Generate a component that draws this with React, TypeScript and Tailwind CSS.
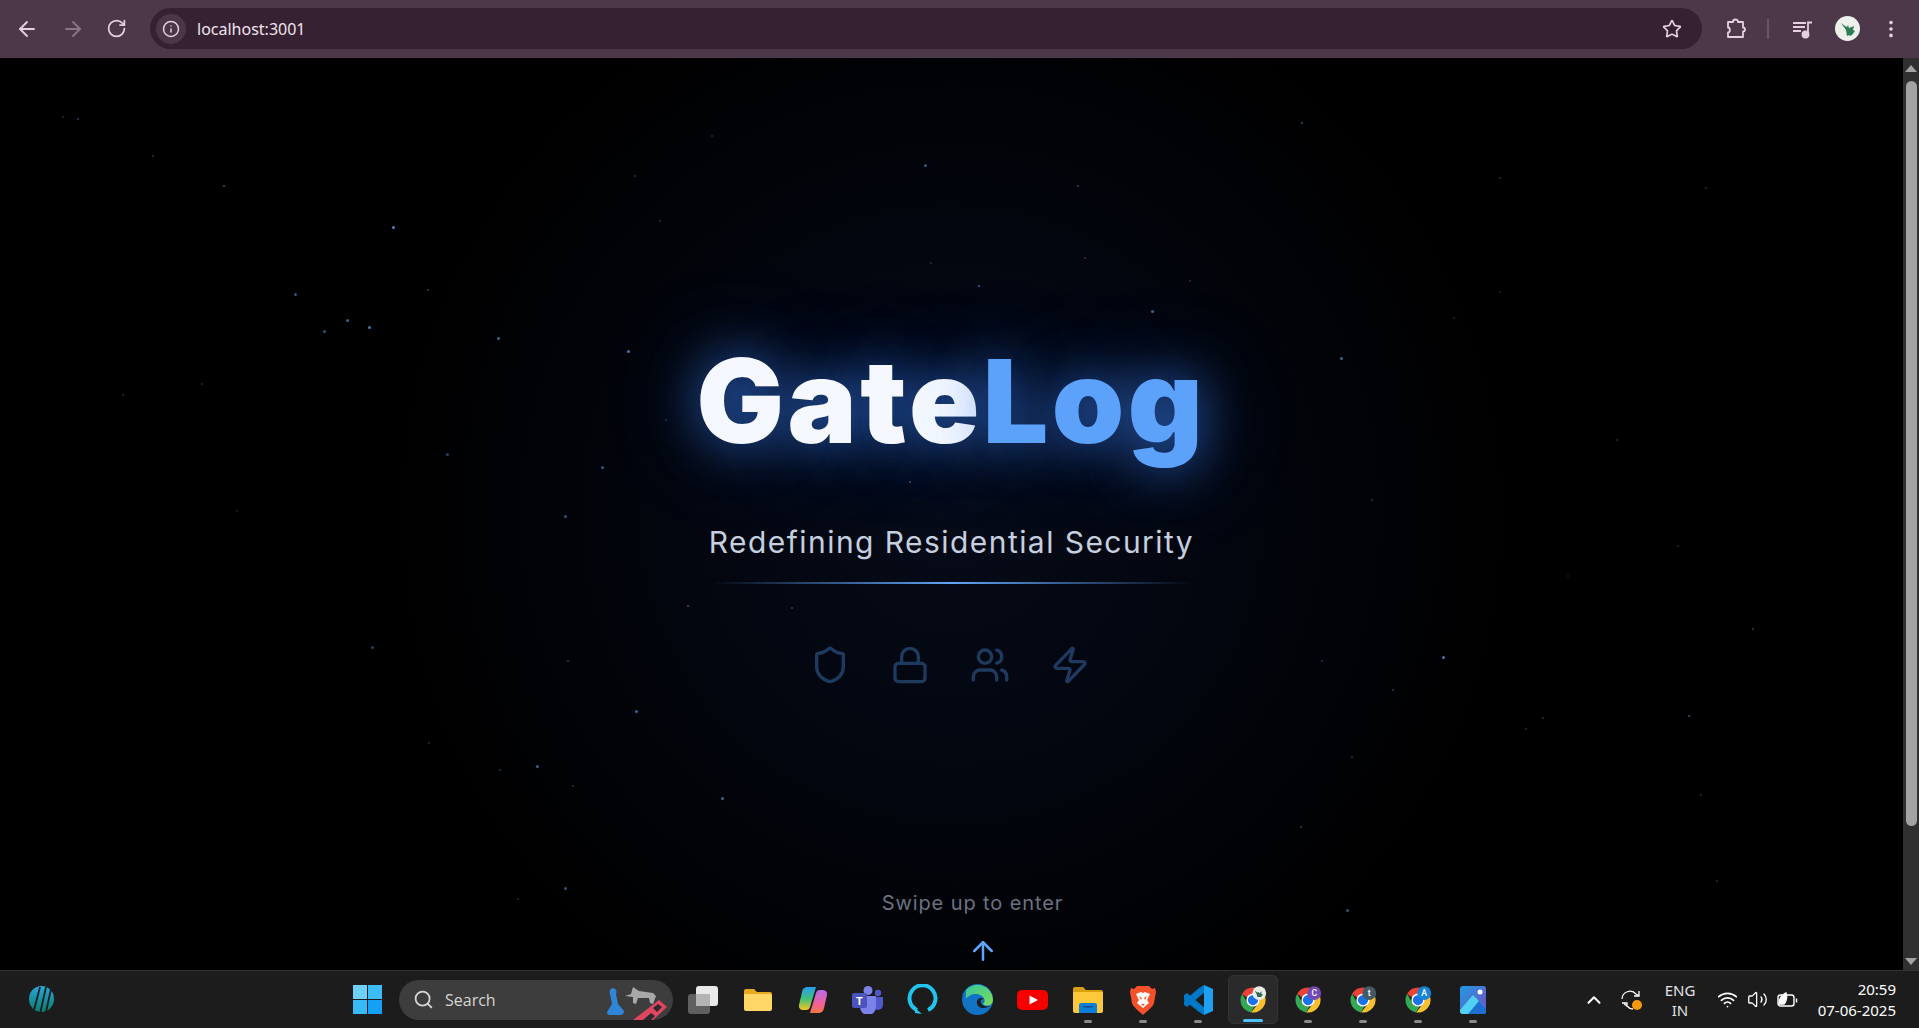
import { ArrowLeft, ArrowRight, ArrowUp, ChevronUp, Info, Lock, MoreVertical, RotateCw, Search, Shield, Star, Users, Volume2, Wifi, Zap } from 'lucide-react';

// star positions as read off the shrunk 1568px picture: [x, y, size, opacity]
const STARS: [number, number, number, number][] = [
    [51, 95, 2, 0.3], [63, 96, 2, 0.4], [124, 127, 2, 0.3], [182, 151, 2, 0.5], [320, 185, 3, 0.8],
    [240, 239, 3, 0.5], [283, 261, 3, 0.6], [301, 266, 3, 0.7], [264, 270, 3, 0.5], [349, 236, 2, 0.4],
    [406, 275, 3, 0.6], [512, 286, 3, 0.7], [100, 322, 2, 0.3], [164, 313, 2, 0.3], [364, 370, 3, 0.4],
    [491, 381, 3, 0.5], [461, 421, 3, 0.5], [193, 417, 2, 0.2], [303, 528, 3, 0.4], [463, 539, 2, 0.4],
    [519, 580, 3, 0.6], [350, 606, 2, 0.3], [438, 625, 3, 0.6], [408, 628, 2, 0.3], [589, 651, 3, 0.6],
    [461, 725, 3, 0.5], [422, 734, 2, 0.3], [467, 641, 2, 0.3], [561, 494, 2, 0.5], [646, 496, 2, 0.4],
    [1178, 536, 3, 0.7], [1095, 292, 3, 0.6], [940, 253, 3, 0.6], [799, 233, 2, 0.6], [755, 134, 3, 0.5],
    [880, 151, 2, 0.4], [1063, 100, 2, 0.5], [1225, 145, 2, 0.3], [1393, 153, 2, 0.3], [1187, 259, 2, 0.3],
    [1225, 238, 2, 0.2], [1320, 359, 2, 0.3], [1370, 445, 2, 0.3], [1431, 513, 2, 0.4], [1260, 586, 2, 0.3],
    [1379, 584, 2, 0.5], [1137, 563, 2, 0.4], [1079, 539, 2, 0.3], [1100, 743, 3, 0.5], [1402, 719, 2, 0.3],
    [1389, 649, 2, 0.3], [1062, 675, 2, 0.4], [1104, 618, 2, 0.3], [1120, 408, 2, 0.3], [971, 229, 2, 0.3],
    [886, 210, 2, 0.3], [760, 214, 2, 0.3], [581, 110, 2, 0.3], [518, 143, 2, 0.3], [538, 180, 2, 0.3],
    [743, 393, 2, 0.5], [613, 298, 2, 0.3], [543, 342, 2, 0.3], [1280, 470, 2, 0.2], [1246, 595, 2, 0.3],
];

const ChromeLogo = ({ badge, badgeColor, badgeText }: { badge?: boolean; badgeColor?: string; badgeText?: string }) => (
    <svg width="30" height="30" viewBox="0 0 48 48">
        <path fill="#fbc02d" d="M41.32 14A20 20 0 0 1 21 43.8L32.66 29A10 10 0 0 0 32.66 19L24 14z" />
        <path fill="#34a853" d="M6.68 14 15.34 29a10 10 0 0 0 11.2 4.7L21 43.8A20 20 0 0 1 6.68 14z" />
        <path fill="#ea4335" d="M24 4A20 20 0 0 1 41.32 14H24a10 10 0 0 0-9.33 6.4L6.68 14A20 20 0 0 1 24 4z" />
        <circle cx="24" cy="24" r="10.5" fill="#fff" />
        <circle cx="24" cy="24" r="8.2" fill="#1a73e8" />
        {badge && <circle cx="34" cy="13" r="11" fill={badgeColor} />}
        {badgeText && (
            <text x="34" y="18" fontSize="14" fontFamily="Roboto, sans-serif" fontWeight="500" fill="#fff" textAnchor="middle">{badgeText}</text>
        )}
        {badgeColor === '#e8ebe6' && <path fill="#2d6a4f" d="M27 9l4 3 2-1 1 2 4-3-1 4 3 1-3 4h-6l-1-4z" />}
    </svg>
);

const TaskItem = ({ children, dot }: { children: React.ReactNode; dot?: boolean }) => (
    <div className="relative flex h-[49px] w-[55px] items-center justify-center">
        {children}
        {dot && <div className="absolute bottom-[1px] h-[3px] w-2 rounded-full bg-[#8a8a8a]" />}
    </div>
);

export default function App() {
    return (
        <div className="flex h-[1028px] w-[1919px] flex-col overflow-hidden bg-black font-['Open_Sans',sans-serif]">
            {/* Browser toolbar */}
            <div className="flex h-[58px] shrink-0 items-center bg-[#4d3849] pb-[1px] text-[#e5cfe0]">
                <div className="flex w-[150px] items-center pl-[15px]">
                    <ArrowLeft className="h-6 w-6" strokeWidth={1.8} />
                    <ArrowRight className="ml-[22px] h-6 w-6 opacity-40" strokeWidth={1.8} />
                    <RotateCw className="ml-[21px] h-[21px] w-[21px]" strokeWidth={2} />
                </div>
                <div className="flex h-[41px] w-[1552px] items-center rounded-full bg-[#352131] pl-[6px] pr-[20px]">
                    <div className="flex h-[30px] w-[30px] items-center justify-center rounded-full bg-[#4a3646]">
                        <Info className="h-[18px] w-[18px]" strokeWidth={2} />
                    </div>
                    <span className="ml-[11px] font-['Noto_Sans',sans-serif] text-[16px] text-[#f0e4ee]">localhost:3001</span>
                    <Star className="ml-auto h-5 w-5" strokeWidth={2} />
                </div>
                <svg className="ml-[23px]" width="22" height="22" viewBox="0 0 22 22" fill="none" stroke="currentColor" strokeWidth="1.8" strokeLinejoin="round">
                    <path d="M3 4h5a2.500 2.500 0 0 1 5 0h5v5.500a2 2 0 0 1 0 4V19H3v-4.500c2.500 0 2.500-5 0-5z" />
                </svg>
                <div className="ml-[20px] h-5 w-[2px] bg-[#6a5365]" />
                <svg className="ml-[23px]" width="22" height="20" viewBox="0 0 22 20" fill="none" stroke="currentColor" strokeWidth="1.8">
                    <path d="M1 4h13M1 8h12M1 12h8" />
                    <path d="M16 15V3.500h4" />
                    <circle cx="13.500" cy="15.500" r="3" fill="currentColor" />
                </svg>
                <div className="ml-[21px] flex h-[25px] w-[25px] items-center justify-center rounded-full bg-[#eef0ec]">
                    <svg width="18" height="18" viewBox="0 0 18 18"><path fill="#2f7d54" d="M2 3l4 3 2 1 1-2 1 3 5-2-1 4 2 1-3 4-2 1-1-1-2 1-1-6z" /></svg>
                </div>
                <MoreVertical className="ml-[20px] h-[22px] w-[22px]" strokeWidth={2} />
            </div>

            {/* Page and scrollbar */}
            <div className="flex h-[912px] shrink-0">
                <main className="relative flex w-[1903px] flex-col items-center overflow-hidden bg-[radial-gradient(circle_at_50%_50%,#060b18_0%,#03060f_25%,#000000_52%)]">
                    {STARS.map(([x, y, size, opacity]) => (
                        <div
                            key={`${x}-${y}`}
                            className="absolute rounded-full bg-[#60a5fa]"
                            style={{ left: x * 1.224, top: y * 1.224 - 58, width: size, height: size, opacity }}
                        />
                    ))}
                    <h1 className="relative mt-[268px] font-['Inter',sans-serif] text-[116px] font-black leading-[150px] tracking-[0.03em] [text-shadow:0_0_50px_rgba(59,130,246,0.7),0_0_100px_rgba(59,130,246,0.3)]">
                        <span className="text-[#f5f8ff]">Gate</span>
                        <span className="text-[#5ca2fa]">Log</span>
                    </h1>
                    <p className="relative mt-[46px] font-['Inter',sans-serif] text-[30px] leading-[40px] tracking-[0.048em] text-[#c5cfdf]">Redefining Residential Security</p>
                    <div className="relative mt-[20px] h-[2px] w-[480px] bg-gradient-to-r from-transparent via-[#60a5fa] to-transparent" />
                    <div className="relative mr-[3px] mt-[61px] flex gap-10 text-[#1e3a5f]">
                        <Shield className="h-10 w-10" strokeWidth={2} />
                        <Lock className="h-10 w-10" strokeWidth={2} />
                        <Users className="h-10 w-10" strokeWidth={2} />
                        <Zap className="h-10 w-10" strokeWidth={2} />
                    </div>
                    <p className="relative ml-[42px] mt-[204px] font-['Inter',sans-serif] text-[20px] leading-[28px] tracking-[0.045em] text-[#6b7280]">Swipe up to enter</p>
                    <ArrowUp className="relative ml-[62px] mt-[19px] h-[30px] w-[30px] text-[#60a5fa]" strokeWidth={2} />
                </main>
                <div className="flex w-4 flex-col items-center bg-[#303030]">
                    <div className="mt-[7px] h-0 w-0 border-x-[6px] border-b-[7px] border-x-transparent border-b-[#a3a3a3]" />
                    <div className="mt-[9px] h-[745px] w-[11px] rounded-full bg-[#a3a3a3]" />
                    <div className="mt-auto mb-[5px] h-0 w-0 border-x-[6px] border-t-[7px] border-x-transparent border-t-[#a3a3a3]" />
                </div>
            </div>

            {/* Windows taskbar */}
            <div className="flex h-[58px] shrink-0 items-center border-t border-[#333333] bg-[#1c1c1c] text-white">
                <div className="ml-[28px]">
                    <svg width="27" height="28" viewBox="0 0 27 28" fill="none">
                        <defs>
                            <linearGradient id="logoA" x1="0" y1="0" x2="0" y2="1">
                                <stop offset="0" stopColor="#25a9dc" />
                                <stop offset="1" stopColor="#0d7a6c" />
                            </linearGradient>
                        </defs>
                        <ellipse cx="13.500" cy="13" rx="12.500" ry="13" fill="url(#logoA)" />
                        <path stroke="#1c1c1c" strokeWidth="1.8" d="M6 24 12 1M12 28 18 1M18 26 23 3" />
                    </svg>
                </div>
                <div className="ml-[298px] grid h-[29px] w-[29px] grid-cols-2 gap-[1.5px]">
                    <div className="bg-[#6fd0fb]" />
                    <div className="bg-[#3cbcf8]" />
                    <div className="bg-[#39baf8]" />
                    <div className="bg-[#13a0f5]" />
                </div>
                <div className="relative ml-[17px] flex h-10 w-[274px] items-center rounded-full bg-[#3d3d3d] pl-[14px]">
                    <Search className="h-[21px] w-[21px] text-[#d8d8d8]" strokeWidth={2} />
                    <span className="ml-[11px] text-[16px] text-[#d4d4d4]">Search</span>
                    <svg className="absolute right-[4px] top-[4px]" width="64" height="36" viewBox="0 0 64 36">
                        <path fill="#2f86d8" d="M8 4a4 4 0 0 1 3 6l2 10 6 7a4 4 0 0 1-4 4H4a3 3 0 0 1-2-3l5-8-2-10a4 4 0 0 1 3-6z" />
                        <path fill="#a8a8a8" d="M20 12l6-2 2-7 6 4 14 2 3 3-3 8-3-1-1-5-11 0-2 6-3-1 0-6z" />
                        <path fill="#e0455f" d="M28 36 54 16l8 7-14 13z" />
                        <path fill="#2a2a2a" d="M38 36l8-7 4 3-4 4zM48 24l5-4 4 3-5 5z" />
                    </svg>
                </div>

                <div className="ml-[2px] flex items-center">
                    <TaskItem>
                        <div className="relative h-[28px] w-[30px]">
                            <div className="absolute bottom-0 left-0 h-5 w-[22px] rounded-[3px] bg-[#5f5f5f]" />
                            <div className="absolute right-0 top-0 h-5 w-[22px] rounded-[3px] bg-[#e9e9e9]" />
                            <div className="absolute left-[8px] top-[8px] h-3 w-[14px] bg-[#b4b4b4]" />
                        </div>
                    </TaskItem>
                    <TaskItem>
                        <svg width="28" height="22" viewBox="0 0 28 22">
                            <path fill="#e8a920" d="M0 2a2 2 0 0 1 2-2h8l3 3h13a2 2 0 0 1 2 2v3H0z" />
                            <path fill="#ffd766" d="M0 5h26a2 2 0 0 1 2 2v13a2 2 0 0 1-2 2H2a2 2 0 0 1-2-2z" />
                        </svg>
                    </TaskItem>
                    <TaskItem>
                        <svg width="28" height="26" viewBox="0 0 28 26">
                            <defs>
                                <linearGradient id="copA" x1="0" y1="0" x2="0" y2="1">
                                    <stop offset="0" stopColor="#2a9df0" />
                                    <stop offset="0.5" stopColor="#3fc07c" />
                                    <stop offset="1" stopColor="#f5c521" />
                                </linearGradient>
                                <linearGradient id="copB" x1="0" y1="0" x2="0" y2="1">
                                    <stop offset="0" stopColor="#b76be8" />
                                    <stop offset="0.6" stopColor="#f0609a" />
                                    <stop offset="1" stopColor="#f8783c" />
                                </linearGradient>
                            </defs>
                            <path fill="url(#copA)" d="M8 0h9l-6 20a4 4 0 0 1-4 3H4a4 4 0 0 1-4-5L3 5a6 6 0 0 1 5-5z" />
                            <path fill="url(#copB)" d="M20 26h-9l6-20a4 4 0 0 1 4-3h3a4 4 0 0 1 4 5l-3 13a6 6 0 0 1-5 5z" />
                        </svg>
                    </TaskItem>
                    <TaskItem>
                        <svg width="31" height="28" viewBox="0 0 31 28">
                            <circle cx="16" cy="4.500" r="4.500" fill="#7b83eb" />
                            <circle cx="26" cy="7" r="3.200" fill="#5059c9" />
                            <path fill="#5059c9" d="M21 11h10v8a5 5 0 0 1-10 0z" />
                            <path fill="#7b83eb" d="M8 10h16v11a7 7 0 0 1-16 0z" />
                            <rect x="0" y="7" width="15" height="15" rx="2" fill="#4b53bc" />
                            <text x="7.500" y="19" fontSize="11" fontWeight="700" fontFamily="Roboto, sans-serif" fill="#fff" textAnchor="middle">T</text>
                        </svg>
                    </TaskItem>
                    <TaskItem>
                        <svg width="31" height="31" viewBox="0 0 31 31" fill="none">
                            <path stroke="#1fc4ef" strokeWidth="4" d="M10 26a13 13 0 1 1 11 0" />
                            <path fill="#1fc4ef" d="M8 24l7 6-7-1z" />
                        </svg>
                    </TaskItem>
                    <TaskItem>
                        <svg width="31" height="31" viewBox="0 0 31 31">
                            <defs>
                                <linearGradient id="edgeA" x1="0" y1="0" x2="1" y2="1">
                                    <stop offset="0" stopColor="#36c5a0" />
                                    <stop offset="1" stopColor="#7ddc54" />
                                </linearGradient>
                            </defs>
                            <circle cx="15.500" cy="15.500" r="15.500" fill="#1273c4" />
                            <path fill="url(#edgeA)" d="M4 6A15.500 15.500 0 0 1 31 15.500c0 4-3 6-6 6-2 0-4-1-4-2 2-1 2-3 1-5-2-4-9-6-14-3-2 1-3 2-4 3 0-3 0-6 0-9z" />
                            <path fill="#1c1c1c" d="M22 24a6 6 0 0 1-7-7c1-3 5-4 7-2-3 0-4 2-3 4 1 3 5 4 9 3-2 1-4 2-6 2z" />
                        </svg>
                    </TaskItem>
                    <TaskItem>
                        <svg width="31" height="20" viewBox="0 0 31 20">
                            <rect width="31" height="20" rx="5" fill="#f70000" />
                            <path fill="#fff" d="M12.500 5.500 21 10l-8.500 4.500z" />
                        </svg>
                    </TaskItem>
                    <TaskItem dot>
                        <svg width="30" height="26" viewBox="0 0 30 26">
                            <path fill="#d99e0b" d="M0 2a2 2 0 0 1 2-2h8l3 3h15a2 2 0 0 1 2 2v4H0z" />
                            <path fill="#fdc93a" d="M0 5h30v19a2 2 0 0 1-2 2H2a2 2 0 0 1-2-2z" />
                            <path fill="#0d7fd6" d="M6 18a2 2 0 0 1 2-2h14a2 2 0 0 1 2 2v8H6z" />
                            <rect x="10" y="19" width="10" height="1.500" fill="#054f8c" />
                        </svg>
                    </TaskItem>
                    <TaskItem dot>
                        <svg width="26" height="30" viewBox="0 0 26 30">
                            <path fill="#f4502a" d="M7 1h12l3 3 3-1 1 4-2 11c-1 4-8 9-11 12-3-3-10-8-11-12L0 7l1-4 3 1z" />
                            <path fill="#fff" d="M6 9l5-2 2 1 2-1 5 2-3 6 2 3-6 5-6-5 2-3z" />
                            <path fill="#f4502a" d="M9 11l3 2-1 2zM17 11l-3 2 1 2zM11 19h4l-2 2z" />
                        </svg>
                    </TaskItem>
                    <TaskItem dot>
                        <svg width="30" height="30" viewBox="0 0 30 30">
                            <path fill="#0078c8" d="M1 10l3-2 18 15-1 7-5-3-15-12z" />
                            <path fill="#0078c8" d="M1 20l3 2L22 7l-1-7-5 3L1 16z" />
                            <path fill="#1fa0f0" d="M21 0l9 4v22l-9 4z" />
                            <path fill="#1c1c1c" d="M21 9l-8 6 8 6z" />
                        </svg>
                    </TaskItem>
                    <div className="relative mx-[2.500px] flex h-[49px] w-[50px] items-center justify-center rounded-[5px] border border-[#333333] bg-[#2a2a2a]">
                        <ChromeLogo badge badgeColor="#e8ebe6" />
                        <div className="absolute bottom-[1px] h-[3px] w-5 rounded-full bg-[#4cc2ff]" />
                    </div>
                    <TaskItem dot><ChromeLogo badge badgeColor="#7248b9" badgeText="C" /></TaskItem>
                    <TaskItem dot><ChromeLogo badge badgeColor="#455a64" badgeText="t" /></TaskItem>
                    <TaskItem dot><ChromeLogo badge badgeColor="#1485d8" badgeText="A" /></TaskItem>
                    <TaskItem dot>
                        <svg width="26" height="28" viewBox="0 0 26 28">
                            <defs>
                                <linearGradient id="photoA" x1="0" y1="0" x2="1" y2="1">
                                    <stop offset="0" stopColor="#1b9ce2" />
                                    <stop offset="1" stopColor="#7b4bc4" />
                                </linearGradient>
                            </defs>
                            <rect width="26" height="28" rx="3" fill="url(#photoA)" />
                            <path fill="#50d0f5" d="M0 24 13 9l13 13v3a3 3 0 0 1-3 3H3a3 3 0 0 1-3-3z" />
                            <path fill="#1d6fd0" d="M8 28 19 15l7 7v3a3 3 0 0 1-3 3z" />
                            <circle cx="20" cy="6" r="2.500" fill="#fff" />
                        </svg>
                    </TaskItem>
                </div>

                {/* Tray */}
                <ChevronUp className="ml-[83px] h-[22px] w-[22px]" strokeWidth={2.2} />
                <div className="relative ml-[15px] h-[22px] w-[22px]">
                    <svg width="22" height="22" viewBox="0 0 22 22" fill="none" stroke="#fff" strokeWidth="1.3">
                        <path d="M2 10a8 8 0 0 1 14-5l3 2M19 2v5h-5" />
                        <path d="M4 15l3 2a8 8 0 0 0 6 3M2 14h5v4" />
                    </svg>
                    <div className="absolute bottom-[1px] right-0 h-[10px] w-[10px] rounded-full bg-[#f79a0e]" />
                </div>
                <div className="ml-[22px] flex w-[32px] flex-col items-center font-['Noto_Sans',sans-serif] text-[15px] leading-[20px] text-[#e2e2e2]">
                    <span>ENG</span>
                    <span>IN</span>
                </div>
                <Wifi className="ml-[21px] h-[21px] w-[21px]" strokeWidth={2} />
                <Volume2 className="ml-[9px] h-[21px] w-[21px]" strokeWidth={1.5} />
                <svg className="ml-[9px]" width="21" height="18" viewBox="0 0 21 18" fill="none" stroke="#fff" strokeWidth="1.4">
                    <rect x="1" y="4" width="16" height="11" rx="2.500" />
                    <path d="M19.500 7.500v4" />
                    <path fill="#fff" d="M2 13c0-5 3-9 7-11 1 3 1 8-2 11z" />
                </svg>
                <div className="ml-[21px] flex w-[77px] flex-col items-end whitespace-nowrap font-['Noto_Sans',sans-serif] text-[15px] leading-[21px] text-white">
                    <span>20:59</span>
                    <span>07-06-2025</span>
                </div>
            </div>
        </div>
    );
}
